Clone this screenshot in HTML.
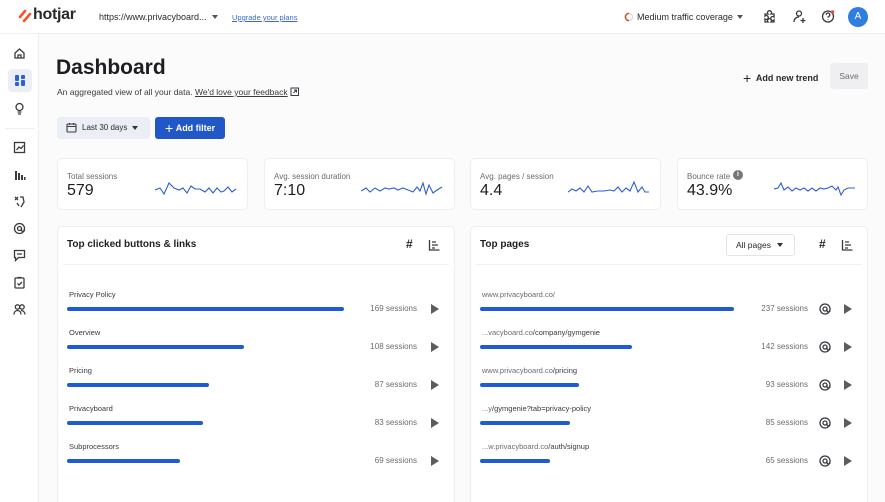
<!DOCTYPE html>
<html style="width:885px;height:502px;overflow:hidden"><head><meta charset="utf-8"><style>
*{box-sizing:border-box;margin:0;padding:0}
body{width:885px;height:502px;overflow:hidden;background:#fbfbfc;font-family:"Liberation Sans",Arial,sans-serif;color:#2a2a2e;position:relative}
.a{position:absolute}
.top{left:0;top:0;width:885px;height:34px;background:#fff;border-bottom:1px solid #eeeef1}
.side{left:0;top:34px;width:39px;height:468px;background:#fff;border-right:1px solid #eeeef1}
.card{background:#fff;border:1px solid #eeeef1;border-radius:5px}
.lbl{font-size:8px;color:#6b6b72}
.val{font-size:16px;color:#1e1e22}
.bar{height:4px;background:#1f5bd1;border-radius:2px}
.row{font-size:7.5px;color:#3a3a40}
.ses{font-size:8px;color:#6b6b72;text-align:right;width:80px}
.play{width:0;height:0;border-left:8px solid #5b5b62;border-top:5px solid transparent;border-bottom:5px solid transparent}
svg.i{position:absolute;fill:none;stroke:#3a3a40;stroke-width:1.3}
</style></head><body>
<div class="a top"></div>
<div class="a side"></div>
<svg class="a" style="left:18px;top:9px" width="14" height="14"><path d="M2 8 L7 2 M6 12 L12 5" stroke="#f4532c" stroke-width="2.6" stroke-linecap="round"/></svg>
<div class="a" style="left:33px;top:6px;font-size:16px;font-weight:bold;color:#2a2a2e;letter-spacing:-0.3px">hotjar</div>
<div class="a" style="left:99px;top:12px;font-size:9px;color:#2a2a2e">https://www.privacyboard...</div>
<div class="a" style="left:212px;top:15px;border-left:3.5px solid transparent;border-right:3.5px solid transparent;border-top:4px solid #555"></div>
<div class="a" style="left:232px;top:13px;font-size:7.5px;color:#3b6ad8;text-decoration:underline">Upgrade your plans</div>
<svg class="a" style="left:624px;top:12px" width="10" height="10"><circle cx="5" cy="5" r="3.6" fill="none" stroke="#ddd" stroke-width="1.5"/><path d="M5 1.4 A3.6 3.6 0 0 0 5 8.6" stroke="#c8542e" stroke-width="1.5" fill="none"/></svg>
<div class="a" style="left:637px;top:12px;font-size:9px;color:#2a2a2e">Medium traffic coverage</div>
<div class="a" style="left:737px;top:15px;border-left:3.5px solid transparent;border-right:3.5px solid transparent;border-top:4px solid #555"></div>
<svg class="i" style="left:762px;top:9px" width="15" height="15"><path d="M3 5h3a2 2 0 1 1 3 0h3v3a2 2 0 1 0 0 3v2H9a2 2 0 1 0-3 0H3v-3a2 2 0 1 0 0-3z"/></svg>
<svg class="i" style="left:792px;top:9px" width="15" height="15"><circle cx="7" cy="4.5" r="2.5"/><path d="M2 13c0-3 2-5 5-5M11 9v5M8.5 11.5h5"/></svg>
<svg class="i" style="left:821px;top:9px" width="15" height="15"><circle cx="7" cy="7.5" r="5.5"/><path d="M5.2 5.8a1.8 1.8 0 1 1 2.4 1.7c-.5.2-.6.6-.6 1.2M7 10.5v.6"/><circle cx="11.5" cy="3" r="1.8" fill="#e5483d" stroke="none"/></svg>
<div class="a" style="left:848px;top:7px;width:20px;height:20px;border-radius:50%;background:#2f7de1;color:#fff;font-size:10px;text-align:center;line-height:20px">A</div>
<svg class="i" style="left:13px;top:47px" width="13" height="13"><path d="M2 6 L6.5 2 L11 6 V11 H2Z M5 11V8h3v3"/></svg>
<div class="a" style="left:8px;top:69px;width:24px;height:23px;background:#eceef6;border-radius:4px"></div>
<svg class="a" style="left:15px;top:75px" width="11" height="11"><rect x="0" y="0" width="4" height="6" rx="1" fill="#2f5fd0"/><rect x="6" y="0" width="4" height="4" rx="1" fill="#2f5fd0"/><rect x="0" y="7" width="4" height="4" rx="1" fill="#2f5fd0"/><rect x="6" y="5" width="4" height="6" rx="1" fill="#2f5fd0"/></svg>
<svg class="i" style="left:13px;top:102px" width="13" height="13"><circle cx="6.5" cy="5" r="3.5"/><path d="M4.5 10h4M5 12h3"/></svg>
<div class="a" style="left:5px;top:128px;width:30px;height:1px;background:#eee"></div>
<svg class="i" style="left:13px;top:141px" width="13" height="13"><rect x="1.5" y="1.5" width="10" height="10"/><path d="M3.5 9l2.5-3 2 1.5 2.5-3"/></svg>
<svg class="a" style="left:14px;top:169px" width="12" height="12"><path d="M1 11V2h2v9zM4 11V4h2v7zM7 11V6h2v5zM10 11V8h1.5v3z" fill="#3a3a40"/></svg>
<svg class="i" style="left:13px;top:195px" width="13" height="13"><path d="M2 2l3 3M2 5l3-3M7 2h3l1 5-3 5M4 8l2 3"/></svg>
<svg class="i" style="left:13px;top:222px" width="13" height="13"><circle cx="6.5" cy="6.5" r="5"/><circle cx="6.5" cy="6.5" r="2"/><path d="M8.5 6.5v1.5a1.5 1.5 0 0 0 3 0"/></svg>
<svg class="i" style="left:13px;top:249px" width="13" height="13"><path d="M1.5 1.5h10v7h-6l-3 3v-3h-1z M4 5h5"/></svg>
<svg class="i" style="left:13px;top:276px" width="13" height="13"><rect x="2" y="2" width="9" height="10" rx="1"/><path d="M4.5 1.5h4M4.5 7.5l1.5 1.5 3-3"/></svg>
<svg class="i" style="left:13px;top:303px" width="13" height="13"><circle cx="4.5" cy="4" r="2.2"/><circle cx="9" cy="4" r="2.2"/><path d="M1 11.5c0-2.5 1.5-4 3.5-4s3.5 1.5 3.5 4M8 7.5c2 0 4 1.5 4 4"/></svg>
<div class="a" style="left:56px;top:56px;font-size:21px;font-weight:bold;color:#1e1e22">Dashboard</div>
<div class="a" style="left:57px;top:87px;font-size:8.5px;color:#3a3a40">An aggregated view of all your data. <span style="text-decoration:underline">We'd love your feedback</span></div>
<svg class="i" style="left:290px;top:87px;stroke-width:1" width="10" height="10"><rect x="1" y="1" width="7.5" height="7.5"/><path d="M3.5 6l3-3M4 3h2.5v2.5"/></svg>
<div class="a" style="left:743px;top:70px;font-size:9px;font-weight:bold;color:#2a2a2e"><span style="font-size:14px;font-weight:normal;vertical-align:-2px">+</span>&nbsp; Add new trend</div>
<div class="a" style="left:830px;top:63px;width:38px;height:26px;background:#efeff2;border-radius:3px;font-size:8.5px;color:#6b6b72;text-align:center;line-height:26px">Save</div>
<div class="a" style="left:57px;top:117px;width:93px;height:22px;background:#eceef6;border-radius:3px"></div>
<svg class="i" style="left:66px;top:122px;stroke-width:1.1" width="11" height="11"><rect x="1" y="2" width="9" height="8" rx="1"/><path d="M1 4.5h9M3.5 1v2M7.5 1v2"/></svg>
<div class="a" style="left:82px;top:123px;font-size:8px;color:#2a2a2e">Last 30 days</div>
<div class="a" style="left:132px;top:126px;border-left:3.5px solid transparent;border-right:3.5px solid transparent;border-top:4px solid #333"></div>
<div class="a" style="left:155px;top:117px;width:70px;height:22px;background:#2257c8;border-radius:3px;color:#fff;font-size:9px;font-weight:bold;line-height:22px;padding-left:10px"><span style="font-size:14px;font-weight:normal;vertical-align:-2px">+</span>&nbsp;Add filter</div>
<div class="a card" style="left:57px;top:158px;width:191px;height:52px"></div>
<div class="a card" style="left:264px;top:158px;width:191px;height:52px"></div>
<div class="a card" style="left:470px;top:158px;width:191px;height:52px"></div>
<div class="a card" style="left:677px;top:158px;width:191px;height:52px"></div>
<div class="a lbl" style="left:67px;top:172px">Total sessions</div>
<div class="a val" style="left:67px;top:182px">579</div>
<div class="a lbl" style="left:274px;top:172px">Avg. session duration</div>
<div class="a val" style="left:274px;top:182px">7:10</div>
<div class="a lbl" style="left:480px;top:172px">Avg. pages / session</div>
<div class="a val" style="left:480px;top:182px">4.4</div>
<div class="a lbl" style="left:687px;top:172px">Bounce rate</div>
<div class="a" style="left:733px;top:170px;width:10px;height:10px;border-radius:50%;background:#777;color:#fff;font-size:7px;text-align:center;line-height:10px;font-weight:bold">i</div>
<div class="a val" style="left:687px;top:182px">43.9%</div>
<svg class="a" style="left:155px;top:180px" width="82" height="18"><polyline fill="none" stroke="#2f5fd0" stroke-width="1.1" points="0,10 5,8 9,14 14,3 19,8 24,10 28,8 32,13 36,6 40,9 45,9 50,12 54,8 58,13 62,8 66,12 69,11 73,7 77,12 81,9"/></svg>
<svg class="a" style="left:361px;top:180px" width="82" height="18"><polyline fill="none" stroke="#2f5fd0" stroke-width="1.1" points="0,11 5,8 9,12 14,8 19,11 24,8 28,9 33,8 37,10 42,8 47,10 52,12 56,7 59,11 62,3 65,14 68,5 72,13 76,10 81,7"/></svg>
<svg class="a" style="left:568px;top:180px" width="82" height="18"><polyline fill="none" stroke="#2f5fd0" stroke-width="1.1" points="0,12 4,9 8,11 12,8 16,12 20,6 24,12 30,11 36,11 42,10 46,11 50,7 54,12 58,8 62,11 66,2 70,12 74,7 77,12 81,12"/></svg>
<svg class="a" style="left:774px;top:180px" width="82" height="18"><polyline fill="none" stroke="#2f5fd0" stroke-width="1.1" points="0,9 4,8 7,3 10,10 14,7 18,11 22,8 26,10 30,8 34,11 38,8 42,11 46,8 50,9 54,8 58,6 62,10 64,7 67,15 70,10 74,8 81,8"/></svg>
<div class="a card" style="left:57px;top:226px;width:398px;height:290px"></div>
<div class="a card" style="left:470px;top:226px;width:398px;height:290px"></div>
<div class="a" style="left:63px;top:264px;width:386px;height:1px;background:#f0f0f3"></div>
<div class="a" style="left:476px;top:264px;width:386px;height:1px;background:#f0f0f3"></div>
<div class="a" style="left:67px;top:239px;font-size:10px;font-weight:bold;color:#1e1e22">Top clicked buttons &amp; links</div>
<div class="a" style="left:480px;top:239px;font-size:10px;font-weight:bold;color:#1e1e22">Top pages</div>
<div class="a" style="left:726px;top:234px;width:69px;height:22px;border:1px solid #e4e4e8;border-radius:3px;background:#fff;font-size:8.5px;color:#2a2a2e;line-height:20px;padding-left:9px">All pages</div>
<div class="a" style="left:777px;top:243px;border-left:3.5px solid transparent;border-right:3.5px solid transparent;border-top:4px solid #333"></div>
<div class="a" style="left:406px;top:237px;font-size:12px;font-weight:bold;color:#2a2a2e">#</div>
<div class="a" style="left:819px;top:237px;font-size:12px;font-weight:bold;color:#2a2a2e">#</div>
<svg class="i" style="left:428px;top:239px" width="12" height="12"><path d="M1.5 1v10h10M4 3h4M4 6h6M4 9h3"/></svg>
<svg class="i" style="left:841px;top:239px" width="12" height="12"><path d="M1.5 1v10h10M4 3h4M4 6h6M4 9h3"/></svg>
<div class="a row" style="left:69px;top:290px">Privacy Policy</div>
<div class="a bar" style="left:67px;top:307px;width:277px"></div>
<div class="a ses" style="left:337px;top:304px">169 sessions</div>
<div class="a play" style="left:431px;top:304px"></div>
<div class="a row" style="left:69px;top:328px">Overview</div>
<div class="a bar" style="left:67px;top:345px;width:177px"></div>
<div class="a ses" style="left:337px;top:342px">108 sessions</div>
<div class="a play" style="left:431px;top:342px"></div>
<div class="a row" style="left:69px;top:366px">Pricing</div>
<div class="a bar" style="left:67px;top:383px;width:142px"></div>
<div class="a ses" style="left:337px;top:380px">87 sessions</div>
<div class="a play" style="left:431px;top:380px"></div>
<div class="a row" style="left:69px;top:404px">Privacyboard</div>
<div class="a bar" style="left:67px;top:421px;width:136px"></div>
<div class="a ses" style="left:337px;top:418px">83 sessions</div>
<div class="a play" style="left:431px;top:418px"></div>
<div class="a row" style="left:69px;top:442px">Subprocessors</div>
<div class="a bar" style="left:67px;top:459px;width:113px"></div>
<div class="a ses" style="left:337px;top:456px">69 sessions</div>
<div class="a play" style="left:431px;top:456px"></div>
<div class="a row" style="left:482px;top:290px;color:#6b6b72">www.privacyboard.co/</div>
<div class="a bar" style="left:480px;top:307px;width:254px"></div>
<div class="a ses" style="left:728px;top:304px">237 sessions</div>
<div class="a row" style="left:482px;top:328px"><span style="color:#6b6b72">...vacyboard.co</span>/company/gymgenie</div>
<div class="a bar" style="left:480px;top:345px;width:152px"></div>
<div class="a ses" style="left:728px;top:342px">142 sessions</div>
<div class="a row" style="left:482px;top:366px"><span style="color:#6b6b72">www.privacyboard.co</span>/pricing</div>
<div class="a bar" style="left:480px;top:383px;width:99px"></div>
<div class="a ses" style="left:728px;top:380px">93 sessions</div>
<div class="a row" style="left:482px;top:404px"><span style="color:#6b6b72">...y</span>/gymgenie?tab=privacy-policy</div>
<div class="a bar" style="left:480px;top:421px;width:90px"></div>
<div class="a ses" style="left:728px;top:418px">85 sessions</div>
<div class="a row" style="left:482px;top:442px"><span style="color:#6b6b72">...w.privacyboard.co</span>/auth/signup</div>
<div class="a bar" style="left:480px;top:459px;width:70px"></div>
<div class="a ses" style="left:728px;top:456px">65 sessions</div>
<svg class="i" style="left:819px;top:303px" width="12" height="12"><circle cx="6" cy="6" r="5"/><circle cx="6" cy="6" r="2"/><path d="M8 6v1.5a1.4 1.4 0 0 0 3 0"/></svg>
<svg class="i" style="left:819px;top:341px" width="12" height="12"><circle cx="6" cy="6" r="5"/><circle cx="6" cy="6" r="2"/><path d="M8 6v1.5a1.4 1.4 0 0 0 3 0"/></svg>
<svg class="i" style="left:819px;top:379px" width="12" height="12"><circle cx="6" cy="6" r="5"/><circle cx="6" cy="6" r="2"/><path d="M8 6v1.5a1.4 1.4 0 0 0 3 0"/></svg>
<svg class="i" style="left:819px;top:417px" width="12" height="12"><circle cx="6" cy="6" r="5"/><circle cx="6" cy="6" r="2"/><path d="M8 6v1.5a1.4 1.4 0 0 0 3 0"/></svg>
<svg class="i" style="left:819px;top:455px" width="12" height="12"><circle cx="6" cy="6" r="5"/><circle cx="6" cy="6" r="2"/><path d="M8 6v1.5a1.4 1.4 0 0 0 3 0"/></svg>
<div class="a play" style="left:844px;top:304px"></div>
<div class="a play" style="left:844px;top:342px"></div>
<div class="a play" style="left:844px;top:380px"></div>
<div class="a play" style="left:844px;top:418px"></div>
<div class="a play" style="left:844px;top:456px"></div>
</body></html>
